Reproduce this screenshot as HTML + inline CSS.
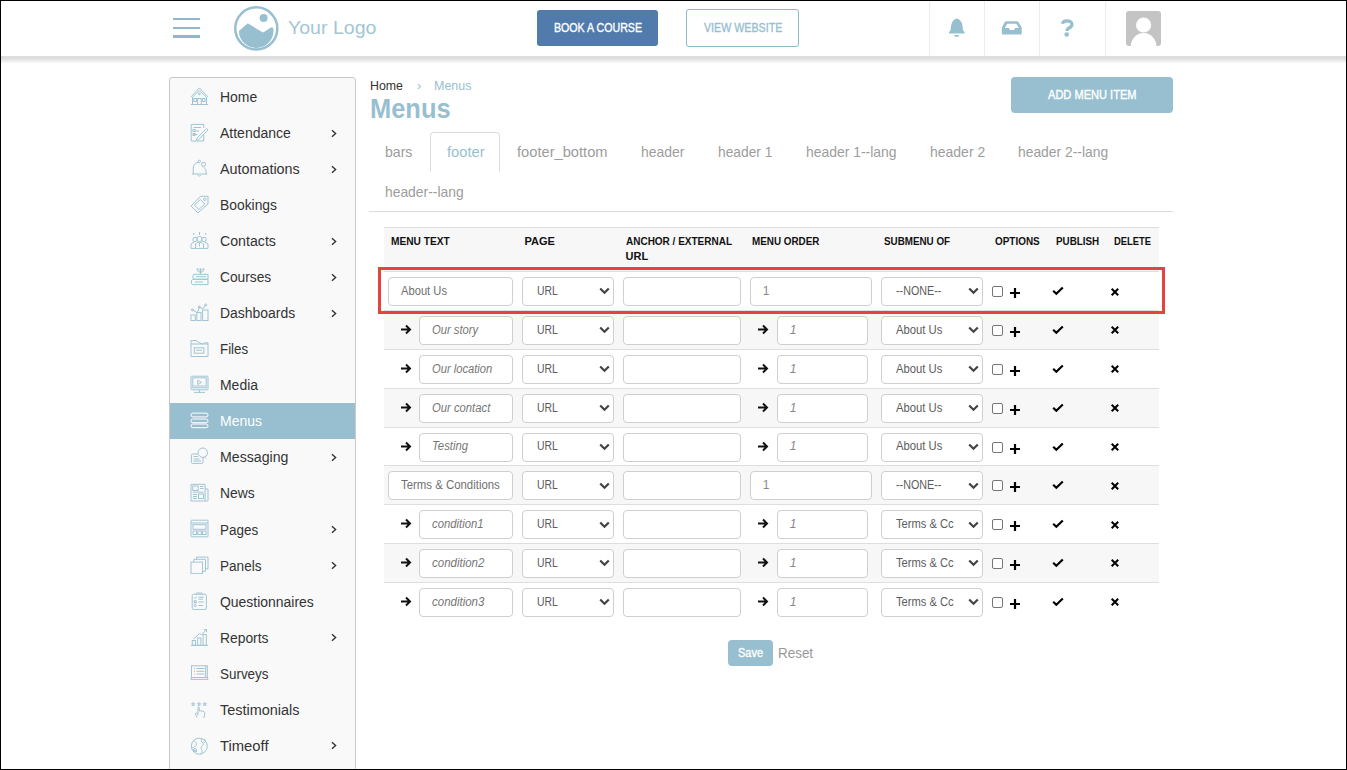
<!DOCTYPE html>
<html><head><meta charset="utf-8"><style>
html,body{margin:0;padding:0;background:#fff;}
#root{position:relative;width:1347px;height:770px;overflow:hidden;background:#fff;font-family:"Liberation Sans", sans-serif;}
.a{position:absolute;}
.t{position:absolute;white-space:pre;}
</style></head><body><div id="root">
<div class="a" style="left:0px;top:56px;width:1347px;height:1px;background:rgb(222,222,222);"></div>
<div class="a" style="left:0px;top:57px;width:1347px;height:1px;background:rgb(220,220,220);"></div>
<div class="a" style="left:0px;top:58px;width:1347px;height:1px;background:rgb(223,223,223);"></div>
<div class="a" style="left:0px;top:59px;width:1347px;height:1px;background:rgb(228,228,228);"></div>
<div class="a" style="left:0px;top:60px;width:1347px;height:1px;background:rgb(234,234,234);"></div>
<div class="a" style="left:0px;top:61px;width:1347px;height:1px;background:rgb(241,241,241);"></div>
<div class="a" style="left:0px;top:62px;width:1347px;height:1px;background:rgb(248,248,248);"></div>
<div class="a" style="left:0px;top:63px;width:1347px;height:1px;background:rgb(253,253,253);"></div>
<div class="a" style="left:172.5px;top:17.5px;width:27.5px;height:2.5px;background:#8fb9cb;"></div>
<div class="a" style="left:172.5px;top:26.5px;width:27.5px;height:2.5px;background:#8fb9cb;"></div>
<div class="a" style="left:172.5px;top:35.4px;width:27.5px;height:2.5px;background:#8fb9cb;"></div>
<svg class="a" style="left:232px;top:5px" width="48" height="48" viewBox="0 0 48 48">
<circle cx="24.3" cy="23.4" r="21.05" fill="none" stroke="#97bfcf" stroke-width="2.5"/>
<circle cx="31.6" cy="13" r="4" fill="#97bfcf"/>
<path d="M7.6 26.2 L15.7 19.2 L31 28.3 L39.4 23.2 Q40.8 22.6 40.8 25 A16.6 16.6 0 0 1 7.6 26.2 Z" fill="#97bfcf" stroke="#97bfcf" stroke-width="1.4" stroke-linejoin="round"/>
</svg>
<div id="t0" class="t" style="left:288.20px;top:17.92px;font-size:19px;line-height:19px;color:#a3c6d4;font-weight:normal;transform:scaleX(1.0287);transform-origin:0 0;">Your Logo</div>
<div class="a" style="left:537px;top:10px;width:121px;height:36px;background:#517bab;border-radius:3px;"></div>
<div id="t1" class="t" style="left:553.70px;top:21.64px;font-size:12px;line-height:12px;color:#fff;font-weight:normal;-webkit-text-stroke:0.35px #fff;transform:scaleX(0.8855);transform-origin:0 0;">BOOK A COURSE</div>
<div class="a" style="left:686px;top:9px;width:113px;height:38px;border:1px solid #8db9cb;border-radius:3px;box-sizing:border-box;"></div>
<div id="t2" class="t" style="left:703.90px;top:21.64px;font-size:12px;line-height:12px;color:#97bfcf;font-weight:normal;-webkit-text-stroke:0.35px #97bfcf;transform:scaleX(0.8896);transform-origin:0 0;">VIEW WEBSITE</div>
<div class="a" style="left:929px;top:0px;width:1px;height:56px;background:#ececec;"></div>
<div class="a" style="left:984px;top:0px;width:1px;height:56px;background:#ececec;"></div>
<div class="a" style="left:1039px;top:0px;width:1px;height:56px;background:#ececec;"></div>
<div class="a" style="left:1105px;top:0px;width:1px;height:56px;background:#ececec;"></div>
<svg class="a" style="left:940px;top:12px" width="32" height="30" viewBox="0 0 32 30">
<path d="M16.8 6.6 C18.6 6.8 20.3 8.3 21.4 10.3 C22.4 12.3 22.7 14.8 22.9 17.3 C23.1 18.7 23.9 19.4 24.6 19.9 L24.6 21.6 L9 21.6 L9 19.9 C9.7 19.4 10.5 18.7 10.7 17.3 C10.9 14.8 11.2 12.3 12.2 10.3 C13.3 8.3 15 6.8 16.8 6.6 Z" fill="#97bfcf"/>
<path d="M14.2 22.9 L19.2 22.9 C19.2 24.1 18 24.8 16.7 24.8 C15.4 24.8 14.2 24.1 14.2 22.9 Z" fill="#97bfcf"/>
</svg>
<svg class="a" style="left:996px;top:12px" width="32" height="30" viewBox="0 0 32 30">
<path d="M10.1 9.35 L21 9.35 C21.6 9.35 22 9.6 22.3 10 L25.7 15.6 L25.7 21.6 C25.7 22.2 25.3 22.6 24.7 22.6 L6.8 22.6 C6.2 22.6 5.8 22.2 5.8 21.6 L5.8 15.6 L8.8 10 C9.1 9.6 9.5 9.35 10.1 9.35 Z M11.3 11.7 L20.3 11.7 L23 16 L19.1 16 L17.9 18.1 L14 18.1 L12.9 16 L8.8 16 Z" fill="#97bfcf" fill-rule="evenodd"/>
</svg>
<svg class="a" style="left:1052px;top:12px" width="32" height="30" viewBox="0 0 32 30">
<path d="M10.4 11.8 C10.8 9.7 12.6 8.8 15.1 8.8 C17.9 8.8 19.9 10.3 19.9 12.4 C19.9 14.3 18.6 15.2 17 16 C15.6 16.8 14.9 17.4 14.9 18.9" fill="none" stroke="#97bfcf" stroke-width="3.3"/>
<circle cx="14.7" cy="22.5" r="2.3" fill="#97bfcf"/>
</svg>
<svg class="a" style="left:1126px;top:11px" width="35" height="35" viewBox="0 0 35 35">
<defs><clipPath id="av"><rect x="0" y="0" width="35" height="35" rx="3"/></clipPath></defs>
<g clip-path="url(#av)"><rect x="0" y="0" width="35" height="35" fill="#c4c4c4"/>
<circle cx="17.6" cy="14" r="7.6" fill="#fff"/>
<ellipse cx="17.6" cy="35.5" rx="12.8" ry="13.5" fill="#fff"/></g>
</svg>
<div class="a" style="left:169px;top:77px;width:187px;height:720px;background:#f9f9f9;border:1px solid #c9c9c9;border-radius:3px;box-sizing:border-box;"></div>
<div id="t3" class="t" style="left:220.00px;top:90.15px;font-size:14px;line-height:14px;color:#333;font-weight:normal;transform:scaleX(0.9957);transform-origin:0 0;">Home</div>
<svg class="a" style="left:190px;top:87.00px" width="19" height="19" viewBox="0 0 19 19" fill="none" stroke="#9fc5d4" stroke-width="1"><path d="M1 9.9 L9.3 0.9 L18 9.9 M3 9.9 L9.3 3.2 L16 9.9"/><circle cx="9.3" cy="6.8" r="1"/><path d="M2.5 10 L2.5 17.4 M16.5 10 L16.5 17.4 M0.8 17.5 L18.2 17.5"/><rect x="7.6" y="11.5" width="3.6" height="6"/><rect x="3.8" y="11.5" width="2.6" height="3"/><rect x="12.4" y="11.5" width="2.6" height="3"/></svg>
<div id="t4" class="t" style="left:220.00px;top:126.18px;font-size:14px;line-height:14px;color:#333;font-weight:normal;">Attendance</div>
<svg class="a" style="left:190px;top:123.03px" width="19" height="19" viewBox="0 0 19 19" fill="none" stroke="#9fc5d4" stroke-width="1"><path d="M13.8 5 L13.8 1.4 L1.2 1.4 L1.2 18 L13.8 18 L13.8 12"/><path d="M7 15.2 L16.5 5.5 L18 7 L8.5 16.7 L6.5 17.2 Z"/><path d="M3.5 4.5 L11 4.5 M3.5 8 L9 8 M3.5 11.5 L7 11.5"/><rect x="3" y="6.5" width="2" height="2"/><rect x="3" y="10.5" width="2" height="2"/></svg>
<svg class="a" style="left:331px;top:128.63px" width="7" height="9" viewBox="0 0 7 9"><path d="M1 1.2 L4.6 4.5 L1 7.8" fill="none" stroke="#333" stroke-width="1.4"/></svg>
<div id="t5" class="t" style="left:220.00px;top:162.21px;font-size:14px;line-height:14px;color:#333;font-weight:normal;transform:scaleX(1.0241);transform-origin:0 0;">Automations</div>
<svg class="a" style="left:190px;top:159.06px" width="19" height="19" viewBox="0 0 19 19" fill="none" stroke="#9fc5d4" stroke-width="1"><path d="M3.2 15 L3.2 9 C3.2 5.8 5.5 3.6 8.5 3.2 M13.5 8.5 C15.5 9.5 16 11 16 12.5 L16 15 M1.8 15 L17.4 15"/><circle cx="9.3" cy="2.4" r="1.2"/><circle cx="13.6" cy="5.4" r="2.1"/><path d="M7.8 16.2 C8 17.3 10.6 17.3 10.8 16.2"/></svg>
<svg class="a" style="left:331px;top:164.66px" width="7" height="9" viewBox="0 0 7 9"><path d="M1 1.2 L4.6 4.5 L1 7.8" fill="none" stroke="#333" stroke-width="1.4"/></svg>
<div id="t6" class="t" style="left:220.00px;top:198.24px;font-size:14px;line-height:14px;color:#333;font-weight:normal;transform:scaleX(0.9897);transform-origin:0 0;">Bookings</div>
<svg class="a" style="left:190px;top:195.09px" width="19" height="19" viewBox="0 0 19 19" fill="none" stroke="#9fc5d4" stroke-width="1"><path d="M10.5 1.3 L18 1.3 L18 9 L7.8 18 L1 10.9 Z"/><path d="M10.3 4.5 L14.8 9 L8.8 14.5 L4.3 10 Z"/><circle cx="14.8" cy="4.3" r="1.2"/></svg>
<div id="t7" class="t" style="left:220.00px;top:234.27px;font-size:14px;line-height:14px;color:#333;font-weight:normal;transform:scaleX(1.0118);transform-origin:0 0;">Contacts</div>
<svg class="a" style="left:190px;top:231.12px" width="19" height="19" viewBox="0 0 19 19" fill="none" stroke="#9fc5d4" stroke-width="1"><circle cx="5" cy="8.5" r="2.2"/><circle cx="14" cy="8.5" r="2.2"/><circle cx="9.5" cy="8" r="2.6"/><path d="M1 17.4 L1 14 C1 12.3 2.5 11.5 4 11.5 M18 17.4 L18 14 C18 12.3 16.5 11.5 15 11.5 M5.5 17.4 L5.5 14 C5.5 12.2 7.2 11.3 9.5 11.3 C11.8 11.3 13.5 12.2 13.5 14 L13.5 17.4 M1 17.4 L18 17.4 M9.5 12 L9.5 15.5"/><path d="M3 2.8 L4.4 2.8 M3.7 2.1 L3.7 3.5 M15 2.8 L16.4 2.8 M15.7 2.1 L15.7 3.5 M9.5 1 L9.5 4"/></svg>
<svg class="a" style="left:331px;top:236.72px" width="7" height="9" viewBox="0 0 7 9"><path d="M1 1.2 L4.6 4.5 L1 7.8" fill="none" stroke="#333" stroke-width="1.4"/></svg>
<div id="t8" class="t" style="left:220.00px;top:270.30px;font-size:14px;line-height:14px;color:#333;font-weight:normal;transform:scaleX(0.9820);transform-origin:0 0;">Courses</div>
<svg class="a" style="left:190px;top:267.15px" width="19" height="19" viewBox="0 0 19 19" fill="none" stroke="#9fc5d4" stroke-width="1"><path d="M10.5 1.3 L10.5 7 M10.5 5.2 C8 5.2 7 3.5 7 1.8 C9 1.8 10.5 3 10.5 5.2 M10.5 5.2 C13 5.2 14 3.5 14 1.8 C12 1.8 10.5 3 10.5 5.2"/><path d="M4 7.3 L18 7.3 L18 12.2 L4 12.2 C2.5 12.2 2.5 7.3 4 7.3 Z M2.5 12.4 L18 12.4 L18 17.6 L2.5 17.6 C0.9 17.6 0.9 12.4 2.5 12.4 Z M6 9.7 L16 9.7 M5 15 L13 15"/></svg>
<svg class="a" style="left:331px;top:272.75px" width="7" height="9" viewBox="0 0 7 9"><path d="M1 1.2 L4.6 4.5 L1 7.8" fill="none" stroke="#333" stroke-width="1.4"/></svg>
<div id="t9" class="t" style="left:220.00px;top:306.33px;font-size:14px;line-height:14px;color:#333;font-weight:normal;transform:scaleX(0.9947);transform-origin:0 0;">Dashboards</div>
<svg class="a" style="left:190px;top:303.18px" width="19" height="19" viewBox="0 0 19 19" fill="none" stroke="#9fc5d4" stroke-width="1"><rect x="1" y="12" width="4.2" height="5.5"/><rect x="6.8" y="9.5" width="4.2" height="8"/><rect x="12.6" y="7" width="5.4" height="10.5"/><path d="M2.7 7 L7.5 9.8 L9.3 4.2 L13 5.8 L15.5 2.2"/><circle cx="2.4" cy="6.8" r="1"/><circle cx="9.3" cy="4" r="1"/><circle cx="15.8" cy="1.9" r="1"/></svg>
<svg class="a" style="left:331px;top:308.78px" width="7" height="9" viewBox="0 0 7 9"><path d="M1 1.2 L4.6 4.5 L1 7.8" fill="none" stroke="#333" stroke-width="1.4"/></svg>
<div id="t10" class="t" style="left:220.00px;top:342.36px;font-size:14px;line-height:14px;color:#333;font-weight:normal;transform:scaleX(0.9505);transform-origin:0 0;">Files</div>
<svg class="a" style="left:190px;top:339.21px" width="19" height="19" viewBox="0 0 19 19" fill="none" stroke="#9fc5d4" stroke-width="1"><path d="M1 3.3 L1 17.5 L18 17.5 L18 3.8 L15.2 3.8 L12.5 5 L9.3 3.6 L6 1.5 L1 1.5 Z M1 5 L18 5"/><rect x="4.3" y="8.8" width="9.6" height="5.4"/><path d="M6 11.2 L12 11.2"/></svg>
<div id="t11" class="t" style="left:220.00px;top:378.39px;font-size:14px;line-height:14px;color:#333;font-weight:normal;transform:scaleX(0.9963);transform-origin:0 0;">Media</div>
<svg class="a" style="left:190px;top:375.24px" width="19" height="19" viewBox="0 0 19 19" fill="none" stroke="#9fc5d4" stroke-width="1"><rect x="1" y="1.2" width="17" height="13.6" rx="0.8"/><rect x="2.8" y="2.8" width="13.4" height="10"/><path d="M7.8 5.2 L11.6 7.4 L7.8 9.6 Z M9.3 14.8 L9.3 17.4 M4 17.4 L15 17.4 M3.5 11 L15.5 11"/></svg>
<div class="a" style="left:170px;top:403.27px;width:185px;height:36px;background:#97bfcf;"></div>
<div id="t12" class="t" style="left:220.00px;top:414.42px;font-size:14px;line-height:14px;color:#fff;font-weight:normal;transform:scaleX(0.9969);transform-origin:0 0;">Menus</div>
<svg class="a" style="left:190px;top:411.27px" width="19" height="19" viewBox="0 0 19 19" fill="none" stroke="#ffffff" stroke-width="1"><rect x="1" y="2.1" width="17" height="3.8" rx="1.9"/><rect x="1" y="8" width="17" height="3.7" rx="1.85"/><rect x="1" y="13" width="17" height="3.7" rx="1.85"/></svg>
<div id="t13" class="t" style="left:220.00px;top:450.45px;font-size:14px;line-height:14px;color:#333;font-weight:normal;transform:scaleX(1.0103);transform-origin:0 0;">Messaging</div>
<svg class="a" style="left:190px;top:447.30px" width="19" height="19" viewBox="0 0 19 19" fill="none" stroke="#9fc5d4" stroke-width="1"><circle cx="12.8" cy="5.7" r="4.7"/><path d="M8 7 L2.6 7 C1.8 7 1.4 7.5 1.4 8.2 L1.4 15.4 C1.4 16 1.8 16.4 2.6 16.4 L11.8 16.4 C12.5 16.4 13 16 13 15.4 L13 10.5 M3.5 9.5 L8 9.5 M3.5 12 L9.5 12 M3.5 14 L11 14 M14.5 10 L16.3 11.6"/></svg>
<svg class="a" style="left:331px;top:452.90px" width="7" height="9" viewBox="0 0 7 9"><path d="M1 1.2 L4.6 4.5 L1 7.8" fill="none" stroke="#333" stroke-width="1.4"/></svg>
<div id="t14" class="t" style="left:220.00px;top:486.48px;font-size:14px;line-height:14px;color:#333;font-weight:normal;transform:scaleX(0.9881);transform-origin:0 0;">News</div>
<svg class="a" style="left:190px;top:483.33px" width="19" height="19" viewBox="0 0 19 19" fill="none" stroke="#9fc5d4" stroke-width="1"><path d="M15.1 1.3 L1 1.3 L1 18 L17.5 18 C18 18 18 17.5 18 17 L18 6 L15.1 6 Z M15.1 6 L15.1 18"/><rect x="2.8" y="3" width="5.4" height="4.5"/><rect x="8.5" y="11" width="5" height="4.5"/><path d="M10 3.5 L13.5 3.5 M10 5.5 L13.5 5.5 M2.8 9.2 L13.5 9.2 M2.8 11.5 L7 11.5 M2.8 13.5 L7 13.5 M2.8 15.5 L7 15.5"/></svg>
<div id="t15" class="t" style="left:220.00px;top:522.51px;font-size:14px;line-height:14px;color:#333;font-weight:normal;transform:scaleX(0.9621);transform-origin:0 0;">Pages</div>
<svg class="a" style="left:190px;top:519.36px" width="19" height="19" viewBox="0 0 19 19" fill="none" stroke="#9fc5d4" stroke-width="1"><rect x="1" y="1.2" width="17" height="16.6" rx="0.5"/><path d="M1 4 L18 4"/><rect x="3" y="5.7" width="13" height="4.6"/><rect x="3" y="12" width="3.5" height="3.5"/><rect x="7.8" y="12" width="3.5" height="3.5"/><rect x="12.5" y="12" width="3.5" height="3.5"/></svg>
<svg class="a" style="left:331px;top:524.96px" width="7" height="9" viewBox="0 0 7 9"><path d="M1 1.2 L4.6 4.5 L1 7.8" fill="none" stroke="#333" stroke-width="1.4"/></svg>
<div id="t16" class="t" style="left:220.00px;top:558.54px;font-size:14px;line-height:14px;color:#333;font-weight:normal;transform:scaleX(0.9693);transform-origin:0 0;">Panels</div>
<svg class="a" style="left:190px;top:555.39px" width="19" height="19" viewBox="0 0 19 19" fill="none" stroke="#9fc5d4" stroke-width="1"><path d="M6.4 4.3 L6.4 2.1 L18 2.1 L18 13.8 L15.5 13.8 M3.8 7 L3.8 4.3 L15.5 4.3 L15.5 16.3 L12.6 16.3"/><rect x="1" y="7.1" width="11.6" height="11.6"/></svg>
<svg class="a" style="left:331px;top:560.99px" width="7" height="9" viewBox="0 0 7 9"><path d="M1 1.2 L4.6 4.5 L1 7.8" fill="none" stroke="#333" stroke-width="1.4"/></svg>
<div id="t17" class="t" style="left:220.00px;top:594.57px;font-size:14px;line-height:14px;color:#333;font-weight:normal;transform:scaleX(0.9961);transform-origin:0 0;">Questionnaires</div>
<svg class="a" style="left:190px;top:591.42px" width="19" height="19" viewBox="0 0 19 19" fill="none" stroke="#9fc5d4" stroke-width="1"><rect x="2.2" y="3.2" width="14.2" height="15.4" rx="1.5"/><path d="M6.5 3.2 L6.5 2 L12 2 L12 3.2 M4.2 6.5 L5 7.5 L6.5 5.5 M8.5 6.2 L14 6.2 M8.5 8.2 L13 8.2 M8.5 11 L14 11 M8.5 14.5 L13 14.5"/><rect x="4.2" y="9.8" width="2" height="2"/><circle cx="5.2" cy="14.5" r="1"/></svg>
<div id="t18" class="t" style="left:220.00px;top:630.60px;font-size:14px;line-height:14px;color:#333;font-weight:normal;transform:scaleX(0.9892);transform-origin:0 0;">Reports</div>
<svg class="a" style="left:190px;top:627.45px" width="19" height="19" viewBox="0 0 19 19" fill="none" stroke="#9fc5d4" stroke-width="1"><rect x="2.3" y="13.5" width="3.2" height="4.8"/><rect x="7.7" y="11" width="3.2" height="7.3"/><rect x="13.1" y="7.5" width="3.2" height="10.8"/><path d="M0.8 18.4 L18.2 18.4 M3.5 12 L9.5 6.5 L11.5 7.8 L16.3 2.8 M13.8 2.6 L16.5 2.6 L16.5 5.3"/></svg>
<svg class="a" style="left:331px;top:633.05px" width="7" height="9" viewBox="0 0 7 9"><path d="M1 1.2 L4.6 4.5 L1 7.8" fill="none" stroke="#333" stroke-width="1.4"/></svg>
<div id="t19" class="t" style="left:220.00px;top:666.63px;font-size:14px;line-height:14px;color:#333;font-weight:normal;transform:scaleX(0.9589);transform-origin:0 0;">Surveys</div>
<svg class="a" style="left:190px;top:663.48px" width="19" height="19" viewBox="0 0 19 19" fill="none" stroke="#9fc5d4" stroke-width="1"><rect x="1.5" y="2.8" width="15.8" height="11.7"/><path d="M0.8 16.4 L18 16.4 M1.5 14.5 L0.8 16.4 M17.3 14.5 L18 16.4 M4 5.5 L5 5.5 M6.5 5.5 L14.5 5.5 M4 8.3 L5 8.3 M6.5 8.3 L14.5 8.3 M4 11 L5 11 M6.5 11 L14.5 11 M15.7 3 L15.7 14"/></svg>
<div id="t20" class="t" style="left:220.00px;top:702.66px;font-size:14px;line-height:14px;color:#333;font-weight:normal;transform:scaleX(1.0308);transform-origin:0 0;">Testimonials</div>
<svg class="a" style="left:190px;top:699.51px" width="19" height="19" viewBox="0 0 19 19" fill="none" stroke="#9fc5d4" stroke-width="1"><path d="M3.1 2.5 L3.6 3.6 L4.7 3.7 L3.9 4.5 L4.1 5.6 L3.1 5 L2.1 5.6 L2.3 4.5 L1.5 3.7 L2.6 3.6 Z M9 2.5 L9.5 3.6 L10.6 3.7 L9.8 4.5 L10 5.6 L9 5 L8 5.6 L8.2 4.5 L7.4 3.7 L8.5 3.6 Z M14.8 2.5 L15.3 3.6 L16.4 3.7 L15.6 4.5 L15.8 5.6 L14.8 5 L13.8 5.6 L14 4.5 L13.2 3.7 L14.3 3.6 Z"/><path d="M8 15.2 L8 7.5 C8 6.8 9.3 6.8 9.3 7.5 L9.3 11 C10.5 10.5 14.5 11 14.8 12.5 L14.5 16 L13.5 18 M8 14 C6.5 12.5 5.2 13 5.5 14 L7.2 17.5"/></svg>
<div id="t21" class="t" style="left:220.00px;top:738.69px;font-size:14px;line-height:14px;color:#333;font-weight:normal;transform:scaleX(1.0565);transform-origin:0 0;">Timeoff</div>
<svg class="a" style="left:190px;top:735.54px" width="19" height="19" viewBox="0 0 19 19" fill="none" stroke="#9fc5d4" stroke-width="1"><circle cx="9.3" cy="10.2" r="8"/><path d="M4 4.5 C5.5 6 6.5 7 6.5 8.5 C6.5 10 5 10 4 11 C3 12 2 12 1.5 11.5 M12 2.6 C11 4 11 5.5 12.5 6.5 C14 7.5 13 9.5 11.5 10.5 C10.5 11.2 11.5 13 12 14.5 C12.5 16 11.5 17.5 10.5 18.2 M3 14.5 C4.5 14 6 14.5 6.5 16 M13.5 4 C14.5 3.5 15.5 4 15.5 5 C15.5 6 14.5 6.5 13.5 6.2"/><circle cx="5" cy="14" r="1.5"/></svg>
<svg class="a" style="left:331px;top:741.14px" width="7" height="9" viewBox="0 0 7 9"><path d="M1 1.2 L4.6 4.5 L1 7.8" fill="none" stroke="#333" stroke-width="1.4"/></svg>
<div id="t22" class="t" style="left:370.00px;top:78.80px;font-size:13px;line-height:13px;color:#333;font-weight:normal;transform:scaleX(0.9514);transform-origin:0 0;">Home</div>
<div id="t23" class="t" style="left:417.00px;top:78.80px;font-size:13px;line-height:13px;color:#97bfcf;font-weight:normal;">›</div>
<div id="t24" class="t" style="left:433.50px;top:78.80px;font-size:13px;line-height:13px;color:#97bfcf;font-weight:normal;transform:scaleX(0.9582);transform-origin:0 0;">Menus</div>
<div id="t25" class="t" style="left:369.60px;top:96.24px;font-size:27px;line-height:27px;color:#97bfcf;font-weight:bold;transform:scaleX(0.9425);transform-origin:0 0;">Menus</div>
<div class="a" style="left:1011px;top:77px;width:162px;height:36px;background:#97bfcf;border-radius:4px;"></div>
<div id="t26" class="t" style="left:1048.10px;top:88.54px;font-size:12px;line-height:12px;color:#fff;font-weight:normal;-webkit-text-stroke:0.35px #fff;transform:scaleX(0.9219);transform-origin:0 0;">ADD MENU ITEM</div>
<div class="a" style="left:430px;top:132px;width:70px;height:40px;border:1px solid #dcdcdc;border-bottom:none;border-radius:4px 4px 0 0;box-sizing:border-box;background:#fff;"></div>
<div class="a" style="left:369px;top:211px;width:804px;height:1px;background:#dcdcdc;"></div>
<div id="t27" class="t" style="left:385.20px;top:144.10px;font-size:15px;line-height:15px;color:#9d9d9d;font-weight:normal;transform:scaleX(0.9388);transform-origin:0 0;">bars</div>
<div id="t28" class="t" style="left:446.50px;top:144.10px;font-size:15px;line-height:15px;color:#97bfcf;font-weight:normal;transform:scaleX(0.9802);transform-origin:0 0;">footer</div>
<div id="t29" class="t" style="left:517.40px;top:144.10px;font-size:15px;line-height:15px;color:#9d9d9d;font-weight:normal;transform:scaleX(0.9788);transform-origin:0 0;">footer_bottom</div>
<div id="t30" class="t" style="left:641.40px;top:144.10px;font-size:15px;line-height:15px;color:#9d9d9d;font-weight:normal;transform:scaleX(0.9311);transform-origin:0 0;">header</div>
<div id="t31" class="t" style="left:717.80px;top:144.10px;font-size:15px;line-height:15px;color:#9d9d9d;font-weight:normal;transform:scaleX(0.9186);transform-origin:0 0;">header 1</div>
<div id="t32" class="t" style="left:805.90px;top:144.10px;font-size:15px;line-height:15px;color:#9d9d9d;font-weight:normal;transform:scaleX(0.9285);transform-origin:0 0;">header 1--lang</div>
<div id="t33" class="t" style="left:929.60px;top:144.10px;font-size:15px;line-height:15px;color:#9d9d9d;font-weight:normal;transform:scaleX(0.9321);transform-origin:0 0;">header 2</div>
<div id="t34" class="t" style="left:1017.90px;top:144.10px;font-size:15px;line-height:15px;color:#9d9d9d;font-weight:normal;transform:scaleX(0.9234);transform-origin:0 0;">header 2--lang</div>
<div id="t35" class="t" style="left:385.20px;top:183.90px;font-size:15px;line-height:15px;color:#9d9d9d;font-weight:normal;transform:scaleX(0.9240);transform-origin:0 0;">header--lang</div>
<div class="a" style="left:384px;top:226.6px;width:775px;height:44.6px;background:#f7f7f7;border-top:1px solid #dedede;box-sizing:border-box;"></div>
<div id="t36" class="t" style="left:391.10px;top:235.89px;font-size:11px;line-height:11px;color:#111;font-weight:bold;transform:scaleX(0.9235);transform-origin:0 0;">MENU TEXT</div>
<div id="t37" class="t" style="left:524.60px;top:235.89px;font-size:11px;line-height:11px;color:#111;font-weight:bold;">PAGE</div>
<div id="t38" class="t" style="left:625.60px;top:235.89px;font-size:11px;line-height:11px;color:#111;font-weight:bold;transform:scaleX(0.9080);transform-origin:0 0;">ANCHOR / EXTERNAL</div>
<div id="t39" class="t" style="left:752.40px;top:235.89px;font-size:11px;line-height:11px;color:#111;font-weight:bold;transform:scaleX(0.8966);transform-origin:0 0;">MENU ORDER</div>
<div id="t40" class="t" style="left:884.00px;top:235.89px;font-size:11px;line-height:11px;color:#111;font-weight:bold;transform:scaleX(0.8938);transform-origin:0 0;">SUBMENU OF</div>
<div id="t41" class="t" style="left:995.30px;top:235.89px;font-size:11px;line-height:11px;color:#111;font-weight:bold;transform:scaleX(0.9027);transform-origin:0 0;">OPTIONS</div>
<div id="t42" class="t" style="left:1055.60px;top:235.89px;font-size:11px;line-height:11px;color:#111;font-weight:bold;transform:scaleX(0.8948);transform-origin:0 0;">PUBLISH</div>
<div id="t43" class="t" style="left:1114.30px;top:235.89px;font-size:11px;line-height:11px;color:#111;font-weight:bold;transform:scaleX(0.8547);transform-origin:0 0;">DELETE</div>
<div id="t44" class="t" style="left:625.60px;top:250.69px;font-size:11px;line-height:11px;color:#111;font-weight:bold;">URL</div>
<div class="a" style="left:384px;top:271.2px;width:775px;height:39px;background:#fff;border-top:1px solid #dedede;box-sizing:border-box;"></div>
<div class="a" style="left:388px;top:277.2px;width:125px;height:29px;background:#fff;border:1px solid #cfcfcf;border-radius:4px;box-sizing:border-box;"></div>
<div id="t45" class="t" style="left:401.00px;top:285.04px;font-size:12px;line-height:12px;color:#707070;font-weight:normal;transform:scaleX(0.9319);transform-origin:0 0;">About Us</div>
<div class="a" style="left:522px;top:277.2px;width:92px;height:29px;background:#fff;border:1px solid #cfcfcf;border-radius:4px;box-sizing:border-box;"></div>
<div id="t46" class="t" style="left:536.60px;top:285.04px;font-size:12px;line-height:12px;color:#5c5c5c;font-weight:normal;transform:scaleX(0.8661);transform-origin:0 0;">URL</div>
<svg class="a" style="left:598.5px;top:287.4px" width="11" height="8" viewBox="0 0 11 8"><path d="M1.2 1.5 L5.5 5.8 L9.8 1.5" fill="none" stroke="#444" stroke-width="2.2"/></svg>
<div class="a" style="left:623px;top:277.2px;width:118px;height:29px;background:#fff;border:1px solid #cfcfcf;border-radius:4px;box-sizing:border-box;"></div>
<div class="a" style="left:750px;top:277.2px;width:122px;height:29px;background:#fff;border:1px solid #cfcfcf;border-radius:4px;box-sizing:border-box;"></div>
<div id="t47" class="t" style="left:762.80px;top:285.04px;font-size:12px;line-height:12px;color:#888;font-weight:normal;">1</div>
<div class="a" style="left:881px;top:277.2px;width:102px;height:29px;background:#fff;border:1px solid #cfcfcf;border-radius:4px;box-sizing:border-box;"></div>
<div id="t48" class="t" style="left:895.60px;top:285.04px;font-size:12px;line-height:12px;color:#5c5c5c;font-weight:normal;transform:scaleX(0.8943);transform-origin:0 0;">--NONE--</div>
<svg class="a" style="left:967.8px;top:287.4px" width="11" height="8" viewBox="0 0 11 8"><path d="M1.2 1.5 L5.5 5.8 L9.8 1.5" fill="none" stroke="#444" stroke-width="2.2"/></svg>
<div class="a" style="left:992px;top:286.2px;width:11px;height:11px;border:1px solid #767676;border-radius:2px;box-sizing:border-box;background:#fff;"></div>
<svg class="a" style="left:1009px;top:287.20px" width="12" height="12" viewBox="0 0 12 12"><path d="M6 1 L6 11 M1 6 L11 6" stroke="#000" stroke-width="2.2"/></svg>
<svg class="a" style="left:1052px;top:286.20px" width="12" height="10" viewBox="0 0 12 10"><path d="M1.2 4.8 L4.3 7.8 L10.8 1.5" fill="none" stroke="#000" stroke-width="2.2"/></svg>
<svg class="a" style="left:1110px;top:286.50px" width="10" height="10" viewBox="0 0 10 10"><path d="M1.7 1.7 L8.2 8.2 M8.2 1.7 L1.7 8.2" stroke="#000" stroke-width="2"/></svg>
<div class="a" style="left:384px;top:310.05px;width:775px;height:39px;background:#f7f7f7;border-top:1px solid #dedede;box-sizing:border-box;"></div>
<svg class="a" style="left:400px;top:324.05px" width="12" height="11" viewBox="0 0 12 11"><path d="M1 5.5 L10 5.5 M6 1.5 L10 5.5 L6 9.5" fill="none" stroke="#111" stroke-width="2"/></svg>
<div class="a" style="left:419px;top:316.05px;width:94px;height:29px;background:#fff;border:1px solid #cfcfcf;border-radius:4px;box-sizing:border-box;"></div>
<div id="t49" class="t" style="left:431.60px;top:323.89px;font-size:12px;line-height:12px;color:#767676;font-weight:normal;font-style:italic;transform:scaleX(0.9363);transform-origin:0 0;">Our story</div>
<div class="a" style="left:522px;top:316.05px;width:92px;height:29px;background:#fff;border:1px solid #cfcfcf;border-radius:4px;box-sizing:border-box;"></div>
<div id="t50" class="t" style="left:536.60px;top:323.89px;font-size:12px;line-height:12px;color:#5c5c5c;font-weight:normal;transform:scaleX(0.8661);transform-origin:0 0;">URL</div>
<svg class="a" style="left:598.5px;top:326.25px" width="11" height="8" viewBox="0 0 11 8"><path d="M1.2 1.5 L5.5 5.8 L9.8 1.5" fill="none" stroke="#444" stroke-width="2.2"/></svg>
<div class="a" style="left:623px;top:316.05px;width:118px;height:29px;background:#fff;border:1px solid #cfcfcf;border-radius:4px;box-sizing:border-box;"></div>
<svg class="a" style="left:757px;top:324.05px" width="12" height="11" viewBox="0 0 12 11"><path d="M1 5.5 L10 5.5 M6 1.5 L10 5.5 L6 9.5" fill="none" stroke="#111" stroke-width="2"/></svg>
<div class="a" style="left:777px;top:316.05px;width:91px;height:29px;background:#fff;border:1px solid #cfcfcf;border-radius:4px;box-sizing:border-box;"></div>
<div id="t51" class="t" style="left:789.80px;top:323.89px;font-size:12px;line-height:12px;color:#888;font-weight:normal;font-style:italic;">1</div>
<div class="a" style="left:881px;top:316.05px;width:102px;height:29px;background:#fff;border:1px solid #cfcfcf;border-radius:4px;box-sizing:border-box;"></div>
<div id="t52" class="t" style="left:895.60px;top:323.89px;font-size:12px;line-height:12px;color:#5c5c5c;font-weight:normal;transform:scaleX(0.9380);transform-origin:0 0;">About Us</div>
<svg class="a" style="left:967.8px;top:326.25px" width="11" height="8" viewBox="0 0 11 8"><path d="M1.2 1.5 L5.5 5.8 L9.8 1.5" fill="none" stroke="#444" stroke-width="2.2"/></svg>
<div class="a" style="left:992px;top:325.05px;width:11px;height:11px;border:1px solid #767676;border-radius:2px;box-sizing:border-box;background:#fff;"></div>
<svg class="a" style="left:1009px;top:326.05px" width="12" height="12" viewBox="0 0 12 12"><path d="M6 1 L6 11 M1 6 L11 6" stroke="#000" stroke-width="2.2"/></svg>
<svg class="a" style="left:1052px;top:325.05px" width="12" height="10" viewBox="0 0 12 10"><path d="M1.2 4.8 L4.3 7.8 L10.8 1.5" fill="none" stroke="#000" stroke-width="2.2"/></svg>
<svg class="a" style="left:1110px;top:325.35px" width="10" height="10" viewBox="0 0 10 10"><path d="M1.7 1.7 L8.2 8.2 M8.2 1.7 L1.7 8.2" stroke="#000" stroke-width="2"/></svg>
<div class="a" style="left:384px;top:348.9px;width:775px;height:39px;background:#fff;border-top:1px solid #dedede;box-sizing:border-box;"></div>
<svg class="a" style="left:400px;top:362.9px" width="12" height="11" viewBox="0 0 12 11"><path d="M1 5.5 L10 5.5 M6 1.5 L10 5.5 L6 9.5" fill="none" stroke="#111" stroke-width="2"/></svg>
<div class="a" style="left:419px;top:354.9px;width:94px;height:29px;background:#fff;border:1px solid #cfcfcf;border-radius:4px;box-sizing:border-box;"></div>
<div id="t53" class="t" style="left:431.60px;top:362.74px;font-size:12px;line-height:12px;color:#767676;font-weight:normal;font-style:italic;transform:scaleX(0.9304);transform-origin:0 0;">Our location</div>
<div class="a" style="left:522px;top:354.9px;width:92px;height:29px;background:#fff;border:1px solid #cfcfcf;border-radius:4px;box-sizing:border-box;"></div>
<div id="t54" class="t" style="left:536.60px;top:362.74px;font-size:12px;line-height:12px;color:#5c5c5c;font-weight:normal;transform:scaleX(0.8661);transform-origin:0 0;">URL</div>
<svg class="a" style="left:598.5px;top:365.09999999999997px" width="11" height="8" viewBox="0 0 11 8"><path d="M1.2 1.5 L5.5 5.8 L9.8 1.5" fill="none" stroke="#444" stroke-width="2.2"/></svg>
<div class="a" style="left:623px;top:354.9px;width:118px;height:29px;background:#fff;border:1px solid #cfcfcf;border-radius:4px;box-sizing:border-box;"></div>
<svg class="a" style="left:757px;top:362.9px" width="12" height="11" viewBox="0 0 12 11"><path d="M1 5.5 L10 5.5 M6 1.5 L10 5.5 L6 9.5" fill="none" stroke="#111" stroke-width="2"/></svg>
<div class="a" style="left:777px;top:354.9px;width:91px;height:29px;background:#fff;border:1px solid #cfcfcf;border-radius:4px;box-sizing:border-box;"></div>
<div id="t55" class="t" style="left:789.80px;top:362.74px;font-size:12px;line-height:12px;color:#888;font-weight:normal;font-style:italic;">1</div>
<div class="a" style="left:881px;top:354.9px;width:102px;height:29px;background:#fff;border:1px solid #cfcfcf;border-radius:4px;box-sizing:border-box;"></div>
<div id="t56" class="t" style="left:895.60px;top:362.74px;font-size:12px;line-height:12px;color:#5c5c5c;font-weight:normal;transform:scaleX(0.9380);transform-origin:0 0;">About Us</div>
<svg class="a" style="left:967.8px;top:365.09999999999997px" width="11" height="8" viewBox="0 0 11 8"><path d="M1.2 1.5 L5.5 5.8 L9.8 1.5" fill="none" stroke="#444" stroke-width="2.2"/></svg>
<div class="a" style="left:992px;top:363.9px;width:11px;height:11px;border:1px solid #767676;border-radius:2px;box-sizing:border-box;background:#fff;"></div>
<svg class="a" style="left:1009px;top:364.90px" width="12" height="12" viewBox="0 0 12 12"><path d="M6 1 L6 11 M1 6 L11 6" stroke="#000" stroke-width="2.2"/></svg>
<svg class="a" style="left:1052px;top:363.90px" width="12" height="10" viewBox="0 0 12 10"><path d="M1.2 4.8 L4.3 7.8 L10.8 1.5" fill="none" stroke="#000" stroke-width="2.2"/></svg>
<svg class="a" style="left:1110px;top:364.20px" width="10" height="10" viewBox="0 0 10 10"><path d="M1.7 1.7 L8.2 8.2 M8.2 1.7 L1.7 8.2" stroke="#000" stroke-width="2"/></svg>
<div class="a" style="left:384px;top:387.75px;width:775px;height:39px;background:#f7f7f7;border-top:1px solid #dedede;box-sizing:border-box;"></div>
<svg class="a" style="left:400px;top:401.75px" width="12" height="11" viewBox="0 0 12 11"><path d="M1 5.5 L10 5.5 M6 1.5 L10 5.5 L6 9.5" fill="none" stroke="#111" stroke-width="2"/></svg>
<div class="a" style="left:419px;top:393.75px;width:94px;height:29px;background:#fff;border:1px solid #cfcfcf;border-radius:4px;box-sizing:border-box;"></div>
<div id="t57" class="t" style="left:431.60px;top:401.59px;font-size:12px;line-height:12px;color:#767676;font-weight:normal;font-style:italic;transform:scaleX(0.9398);transform-origin:0 0;">Our contact</div>
<div class="a" style="left:522px;top:393.75px;width:92px;height:29px;background:#fff;border:1px solid #cfcfcf;border-radius:4px;box-sizing:border-box;"></div>
<div id="t58" class="t" style="left:536.60px;top:401.59px;font-size:12px;line-height:12px;color:#5c5c5c;font-weight:normal;transform:scaleX(0.8661);transform-origin:0 0;">URL</div>
<svg class="a" style="left:598.5px;top:403.95px" width="11" height="8" viewBox="0 0 11 8"><path d="M1.2 1.5 L5.5 5.8 L9.8 1.5" fill="none" stroke="#444" stroke-width="2.2"/></svg>
<div class="a" style="left:623px;top:393.75px;width:118px;height:29px;background:#fff;border:1px solid #cfcfcf;border-radius:4px;box-sizing:border-box;"></div>
<svg class="a" style="left:757px;top:401.75px" width="12" height="11" viewBox="0 0 12 11"><path d="M1 5.5 L10 5.5 M6 1.5 L10 5.5 L6 9.5" fill="none" stroke="#111" stroke-width="2"/></svg>
<div class="a" style="left:777px;top:393.75px;width:91px;height:29px;background:#fff;border:1px solid #cfcfcf;border-radius:4px;box-sizing:border-box;"></div>
<div id="t59" class="t" style="left:789.80px;top:401.59px;font-size:12px;line-height:12px;color:#888;font-weight:normal;font-style:italic;">1</div>
<div class="a" style="left:881px;top:393.75px;width:102px;height:29px;background:#fff;border:1px solid #cfcfcf;border-radius:4px;box-sizing:border-box;"></div>
<div id="t60" class="t" style="left:895.60px;top:401.59px;font-size:12px;line-height:12px;color:#5c5c5c;font-weight:normal;transform:scaleX(0.9380);transform-origin:0 0;">About Us</div>
<svg class="a" style="left:967.8px;top:403.95px" width="11" height="8" viewBox="0 0 11 8"><path d="M1.2 1.5 L5.5 5.8 L9.8 1.5" fill="none" stroke="#444" stroke-width="2.2"/></svg>
<div class="a" style="left:992px;top:402.75px;width:11px;height:11px;border:1px solid #767676;border-radius:2px;box-sizing:border-box;background:#fff;"></div>
<svg class="a" style="left:1009px;top:403.75px" width="12" height="12" viewBox="0 0 12 12"><path d="M6 1 L6 11 M1 6 L11 6" stroke="#000" stroke-width="2.2"/></svg>
<svg class="a" style="left:1052px;top:402.75px" width="12" height="10" viewBox="0 0 12 10"><path d="M1.2 4.8 L4.3 7.8 L10.8 1.5" fill="none" stroke="#000" stroke-width="2.2"/></svg>
<svg class="a" style="left:1110px;top:403.05px" width="10" height="10" viewBox="0 0 10 10"><path d="M1.7 1.7 L8.2 8.2 M8.2 1.7 L1.7 8.2" stroke="#000" stroke-width="2"/></svg>
<div class="a" style="left:384px;top:426.6px;width:775px;height:39px;background:#fff;border-top:1px solid #dedede;box-sizing:border-box;"></div>
<svg class="a" style="left:400px;top:440.6px" width="12" height="11" viewBox="0 0 12 11"><path d="M1 5.5 L10 5.5 M6 1.5 L10 5.5 L6 9.5" fill="none" stroke="#111" stroke-width="2"/></svg>
<div class="a" style="left:419px;top:432.6px;width:94px;height:29px;background:#fff;border:1px solid #cfcfcf;border-radius:4px;box-sizing:border-box;"></div>
<div id="t61" class="t" style="left:431.60px;top:440.44px;font-size:12px;line-height:12px;color:#767676;font-weight:normal;font-style:italic;transform:scaleX(0.9412);transform-origin:0 0;">Testing</div>
<div class="a" style="left:522px;top:432.6px;width:92px;height:29px;background:#fff;border:1px solid #cfcfcf;border-radius:4px;box-sizing:border-box;"></div>
<div id="t62" class="t" style="left:536.60px;top:440.44px;font-size:12px;line-height:12px;color:#5c5c5c;font-weight:normal;transform:scaleX(0.8661);transform-origin:0 0;">URL</div>
<svg class="a" style="left:598.5px;top:442.8px" width="11" height="8" viewBox="0 0 11 8"><path d="M1.2 1.5 L5.5 5.8 L9.8 1.5" fill="none" stroke="#444" stroke-width="2.2"/></svg>
<div class="a" style="left:623px;top:432.6px;width:118px;height:29px;background:#fff;border:1px solid #cfcfcf;border-radius:4px;box-sizing:border-box;"></div>
<svg class="a" style="left:757px;top:440.6px" width="12" height="11" viewBox="0 0 12 11"><path d="M1 5.5 L10 5.5 M6 1.5 L10 5.5 L6 9.5" fill="none" stroke="#111" stroke-width="2"/></svg>
<div class="a" style="left:777px;top:432.6px;width:91px;height:29px;background:#fff;border:1px solid #cfcfcf;border-radius:4px;box-sizing:border-box;"></div>
<div id="t63" class="t" style="left:789.80px;top:440.44px;font-size:12px;line-height:12px;color:#888;font-weight:normal;font-style:italic;">1</div>
<div class="a" style="left:881px;top:432.6px;width:102px;height:29px;background:#fff;border:1px solid #cfcfcf;border-radius:4px;box-sizing:border-box;"></div>
<div id="t64" class="t" style="left:895.60px;top:440.44px;font-size:12px;line-height:12px;color:#5c5c5c;font-weight:normal;transform:scaleX(0.9380);transform-origin:0 0;">About Us</div>
<svg class="a" style="left:967.8px;top:442.8px" width="11" height="8" viewBox="0 0 11 8"><path d="M1.2 1.5 L5.5 5.8 L9.8 1.5" fill="none" stroke="#444" stroke-width="2.2"/></svg>
<div class="a" style="left:992px;top:441.6px;width:11px;height:11px;border:1px solid #767676;border-radius:2px;box-sizing:border-box;background:#fff;"></div>
<svg class="a" style="left:1009px;top:442.60px" width="12" height="12" viewBox="0 0 12 12"><path d="M6 1 L6 11 M1 6 L11 6" stroke="#000" stroke-width="2.2"/></svg>
<svg class="a" style="left:1052px;top:441.60px" width="12" height="10" viewBox="0 0 12 10"><path d="M1.2 4.8 L4.3 7.8 L10.8 1.5" fill="none" stroke="#000" stroke-width="2.2"/></svg>
<svg class="a" style="left:1110px;top:441.90px" width="10" height="10" viewBox="0 0 10 10"><path d="M1.7 1.7 L8.2 8.2 M8.2 1.7 L1.7 8.2" stroke="#000" stroke-width="2"/></svg>
<div class="a" style="left:384px;top:465.45px;width:775px;height:39px;background:#f7f7f7;border-top:1px solid #dedede;box-sizing:border-box;"></div>
<div class="a" style="left:388px;top:471.45px;width:125px;height:29px;background:#fff;border:1px solid #cfcfcf;border-radius:4px;box-sizing:border-box;"></div>
<div id="t65" class="t" style="left:401.00px;top:479.29px;font-size:12px;line-height:12px;color:#707070;font-weight:normal;transform:scaleX(0.9496);transform-origin:0 0;">Terms &amp; Conditions</div>
<div class="a" style="left:522px;top:471.45px;width:92px;height:29px;background:#fff;border:1px solid #cfcfcf;border-radius:4px;box-sizing:border-box;"></div>
<div id="t66" class="t" style="left:536.60px;top:479.29px;font-size:12px;line-height:12px;color:#5c5c5c;font-weight:normal;transform:scaleX(0.8661);transform-origin:0 0;">URL</div>
<svg class="a" style="left:598.5px;top:481.65px" width="11" height="8" viewBox="0 0 11 8"><path d="M1.2 1.5 L5.5 5.8 L9.8 1.5" fill="none" stroke="#444" stroke-width="2.2"/></svg>
<div class="a" style="left:623px;top:471.45px;width:118px;height:29px;background:#fff;border:1px solid #cfcfcf;border-radius:4px;box-sizing:border-box;"></div>
<div class="a" style="left:750px;top:471.45px;width:122px;height:29px;background:#fff;border:1px solid #cfcfcf;border-radius:4px;box-sizing:border-box;"></div>
<div id="t67" class="t" style="left:762.80px;top:479.29px;font-size:12px;line-height:12px;color:#888;font-weight:normal;">1</div>
<div class="a" style="left:881px;top:471.45px;width:102px;height:29px;background:#fff;border:1px solid #cfcfcf;border-radius:4px;box-sizing:border-box;"></div>
<div id="t68" class="t" style="left:895.60px;top:479.29px;font-size:12px;line-height:12px;color:#5c5c5c;font-weight:normal;transform:scaleX(0.8943);transform-origin:0 0;">--NONE--</div>
<svg class="a" style="left:967.8px;top:481.65px" width="11" height="8" viewBox="0 0 11 8"><path d="M1.2 1.5 L5.5 5.8 L9.8 1.5" fill="none" stroke="#444" stroke-width="2.2"/></svg>
<div class="a" style="left:992px;top:480.45px;width:11px;height:11px;border:1px solid #767676;border-radius:2px;box-sizing:border-box;background:#fff;"></div>
<svg class="a" style="left:1009px;top:481.45px" width="12" height="12" viewBox="0 0 12 12"><path d="M6 1 L6 11 M1 6 L11 6" stroke="#000" stroke-width="2.2"/></svg>
<svg class="a" style="left:1052px;top:480.45px" width="12" height="10" viewBox="0 0 12 10"><path d="M1.2 4.8 L4.3 7.8 L10.8 1.5" fill="none" stroke="#000" stroke-width="2.2"/></svg>
<svg class="a" style="left:1110px;top:480.75px" width="10" height="10" viewBox="0 0 10 10"><path d="M1.7 1.7 L8.2 8.2 M8.2 1.7 L1.7 8.2" stroke="#000" stroke-width="2"/></svg>
<div class="a" style="left:384px;top:504.3px;width:775px;height:39px;background:#fff;border-top:1px solid #dedede;box-sizing:border-box;"></div>
<svg class="a" style="left:400px;top:518.3px" width="12" height="11" viewBox="0 0 12 11"><path d="M1 5.5 L10 5.5 M6 1.5 L10 5.5 L6 9.5" fill="none" stroke="#111" stroke-width="2"/></svg>
<div class="a" style="left:419px;top:510.3px;width:94px;height:29px;background:#fff;border:1px solid #cfcfcf;border-radius:4px;box-sizing:border-box;"></div>
<div id="t69" class="t" style="left:431.60px;top:518.14px;font-size:12px;line-height:12px;color:#767676;font-weight:normal;font-style:italic;transform:scaleX(0.9412);transform-origin:0 0;">condition1</div>
<div class="a" style="left:522px;top:510.3px;width:92px;height:29px;background:#fff;border:1px solid #cfcfcf;border-radius:4px;box-sizing:border-box;"></div>
<div id="t70" class="t" style="left:536.60px;top:518.14px;font-size:12px;line-height:12px;color:#5c5c5c;font-weight:normal;transform:scaleX(0.8661);transform-origin:0 0;">URL</div>
<svg class="a" style="left:598.5px;top:520.5px" width="11" height="8" viewBox="0 0 11 8"><path d="M1.2 1.5 L5.5 5.8 L9.8 1.5" fill="none" stroke="#444" stroke-width="2.2"/></svg>
<div class="a" style="left:623px;top:510.3px;width:118px;height:29px;background:#fff;border:1px solid #cfcfcf;border-radius:4px;box-sizing:border-box;"></div>
<svg class="a" style="left:757px;top:518.3px" width="12" height="11" viewBox="0 0 12 11"><path d="M1 5.5 L10 5.5 M6 1.5 L10 5.5 L6 9.5" fill="none" stroke="#111" stroke-width="2"/></svg>
<div class="a" style="left:777px;top:510.3px;width:91px;height:29px;background:#fff;border:1px solid #cfcfcf;border-radius:4px;box-sizing:border-box;"></div>
<div id="t71" class="t" style="left:789.80px;top:518.14px;font-size:12px;line-height:12px;color:#888;font-weight:normal;font-style:italic;">1</div>
<div class="a" style="left:881px;top:510.3px;width:102px;height:29px;background:#fff;border:1px solid #cfcfcf;border-radius:4px;box-sizing:border-box;"></div>
<div id="t72" class="t" style="left:895.60px;top:518.14px;font-size:12px;line-height:12px;color:#5c5c5c;font-weight:normal;transform:scaleX(0.9304);transform-origin:0 0;">Terms &amp; Cc</div>
<svg class="a" style="left:967.8px;top:520.5px" width="11" height="8" viewBox="0 0 11 8"><path d="M1.2 1.5 L5.5 5.8 L9.8 1.5" fill="none" stroke="#444" stroke-width="2.2"/></svg>
<div class="a" style="left:992px;top:519.3px;width:11px;height:11px;border:1px solid #767676;border-radius:2px;box-sizing:border-box;background:#fff;"></div>
<svg class="a" style="left:1009px;top:520.30px" width="12" height="12" viewBox="0 0 12 12"><path d="M6 1 L6 11 M1 6 L11 6" stroke="#000" stroke-width="2.2"/></svg>
<svg class="a" style="left:1052px;top:519.30px" width="12" height="10" viewBox="0 0 12 10"><path d="M1.2 4.8 L4.3 7.8 L10.8 1.5" fill="none" stroke="#000" stroke-width="2.2"/></svg>
<svg class="a" style="left:1110px;top:519.60px" width="10" height="10" viewBox="0 0 10 10"><path d="M1.7 1.7 L8.2 8.2 M8.2 1.7 L1.7 8.2" stroke="#000" stroke-width="2"/></svg>
<div class="a" style="left:384px;top:543.15px;width:775px;height:39px;background:#f7f7f7;border-top:1px solid #dedede;box-sizing:border-box;"></div>
<svg class="a" style="left:400px;top:557.15px" width="12" height="11" viewBox="0 0 12 11"><path d="M1 5.5 L10 5.5 M6 1.5 L10 5.5 L6 9.5" fill="none" stroke="#111" stroke-width="2"/></svg>
<div class="a" style="left:419px;top:549.15px;width:94px;height:29px;background:#fff;border:1px solid #cfcfcf;border-radius:4px;box-sizing:border-box;"></div>
<div id="t73" class="t" style="left:431.60px;top:556.99px;font-size:12px;line-height:12px;color:#767676;font-weight:normal;font-style:italic;transform:scaleX(0.9576);transform-origin:0 0;">condition2</div>
<div class="a" style="left:522px;top:549.15px;width:92px;height:29px;background:#fff;border:1px solid #cfcfcf;border-radius:4px;box-sizing:border-box;"></div>
<div id="t74" class="t" style="left:536.60px;top:556.99px;font-size:12px;line-height:12px;color:#5c5c5c;font-weight:normal;transform:scaleX(0.8661);transform-origin:0 0;">URL</div>
<svg class="a" style="left:598.5px;top:559.35px" width="11" height="8" viewBox="0 0 11 8"><path d="M1.2 1.5 L5.5 5.8 L9.8 1.5" fill="none" stroke="#444" stroke-width="2.2"/></svg>
<div class="a" style="left:623px;top:549.15px;width:118px;height:29px;background:#fff;border:1px solid #cfcfcf;border-radius:4px;box-sizing:border-box;"></div>
<svg class="a" style="left:757px;top:557.15px" width="12" height="11" viewBox="0 0 12 11"><path d="M1 5.5 L10 5.5 M6 1.5 L10 5.5 L6 9.5" fill="none" stroke="#111" stroke-width="2"/></svg>
<div class="a" style="left:777px;top:549.15px;width:91px;height:29px;background:#fff;border:1px solid #cfcfcf;border-radius:4px;box-sizing:border-box;"></div>
<div id="t75" class="t" style="left:789.80px;top:556.99px;font-size:12px;line-height:12px;color:#888;font-weight:normal;font-style:italic;">1</div>
<div class="a" style="left:881px;top:549.15px;width:102px;height:29px;background:#fff;border:1px solid #cfcfcf;border-radius:4px;box-sizing:border-box;"></div>
<div id="t76" class="t" style="left:895.60px;top:556.99px;font-size:12px;line-height:12px;color:#5c5c5c;font-weight:normal;transform:scaleX(0.9304);transform-origin:0 0;">Terms &amp; Cc</div>
<svg class="a" style="left:967.8px;top:559.35px" width="11" height="8" viewBox="0 0 11 8"><path d="M1.2 1.5 L5.5 5.8 L9.8 1.5" fill="none" stroke="#444" stroke-width="2.2"/></svg>
<div class="a" style="left:992px;top:558.15px;width:11px;height:11px;border:1px solid #767676;border-radius:2px;box-sizing:border-box;background:#fff;"></div>
<svg class="a" style="left:1009px;top:559.15px" width="12" height="12" viewBox="0 0 12 12"><path d="M6 1 L6 11 M1 6 L11 6" stroke="#000" stroke-width="2.2"/></svg>
<svg class="a" style="left:1052px;top:558.15px" width="12" height="10" viewBox="0 0 12 10"><path d="M1.2 4.8 L4.3 7.8 L10.8 1.5" fill="none" stroke="#000" stroke-width="2.2"/></svg>
<svg class="a" style="left:1110px;top:558.45px" width="10" height="10" viewBox="0 0 10 10"><path d="M1.7 1.7 L8.2 8.2 M8.2 1.7 L1.7 8.2" stroke="#000" stroke-width="2"/></svg>
<div class="a" style="left:384px;top:582.0px;width:775px;height:39px;background:#fff;border-top:1px solid #dedede;box-sizing:border-box;"></div>
<svg class="a" style="left:400px;top:596.0px" width="12" height="11" viewBox="0 0 12 11"><path d="M1 5.5 L10 5.5 M6 1.5 L10 5.5 L6 9.5" fill="none" stroke="#111" stroke-width="2"/></svg>
<div class="a" style="left:419px;top:588.0px;width:94px;height:29px;background:#fff;border:1px solid #cfcfcf;border-radius:4px;box-sizing:border-box;"></div>
<div id="t77" class="t" style="left:431.60px;top:595.84px;font-size:12px;line-height:12px;color:#767676;font-weight:normal;font-style:italic;transform:scaleX(0.9576);transform-origin:0 0;">condition3</div>
<div class="a" style="left:522px;top:588.0px;width:92px;height:29px;background:#fff;border:1px solid #cfcfcf;border-radius:4px;box-sizing:border-box;"></div>
<div id="t78" class="t" style="left:536.60px;top:595.84px;font-size:12px;line-height:12px;color:#5c5c5c;font-weight:normal;transform:scaleX(0.8661);transform-origin:0 0;">URL</div>
<svg class="a" style="left:598.5px;top:598.2px" width="11" height="8" viewBox="0 0 11 8"><path d="M1.2 1.5 L5.5 5.8 L9.8 1.5" fill="none" stroke="#444" stroke-width="2.2"/></svg>
<div class="a" style="left:623px;top:588.0px;width:118px;height:29px;background:#fff;border:1px solid #cfcfcf;border-radius:4px;box-sizing:border-box;"></div>
<svg class="a" style="left:757px;top:596.0px" width="12" height="11" viewBox="0 0 12 11"><path d="M1 5.5 L10 5.5 M6 1.5 L10 5.5 L6 9.5" fill="none" stroke="#111" stroke-width="2"/></svg>
<div class="a" style="left:777px;top:588.0px;width:91px;height:29px;background:#fff;border:1px solid #cfcfcf;border-radius:4px;box-sizing:border-box;"></div>
<div id="t79" class="t" style="left:789.80px;top:595.84px;font-size:12px;line-height:12px;color:#888;font-weight:normal;font-style:italic;">1</div>
<div class="a" style="left:881px;top:588.0px;width:102px;height:29px;background:#fff;border:1px solid #cfcfcf;border-radius:4px;box-sizing:border-box;"></div>
<div id="t80" class="t" style="left:895.60px;top:595.84px;font-size:12px;line-height:12px;color:#5c5c5c;font-weight:normal;transform:scaleX(0.9304);transform-origin:0 0;">Terms &amp; Cc</div>
<svg class="a" style="left:967.8px;top:598.2px" width="11" height="8" viewBox="0 0 11 8"><path d="M1.2 1.5 L5.5 5.8 L9.8 1.5" fill="none" stroke="#444" stroke-width="2.2"/></svg>
<div class="a" style="left:992px;top:597.0px;width:11px;height:11px;border:1px solid #767676;border-radius:2px;box-sizing:border-box;background:#fff;"></div>
<svg class="a" style="left:1009px;top:598.00px" width="12" height="12" viewBox="0 0 12 12"><path d="M6 1 L6 11 M1 6 L11 6" stroke="#000" stroke-width="2.2"/></svg>
<svg class="a" style="left:1052px;top:597.00px" width="12" height="10" viewBox="0 0 12 10"><path d="M1.2 4.8 L4.3 7.8 L10.8 1.5" fill="none" stroke="#000" stroke-width="2.2"/></svg>
<svg class="a" style="left:1110px;top:597.30px" width="10" height="10" viewBox="0 0 10 10"><path d="M1.7 1.7 L8.2 8.2 M8.2 1.7 L1.7 8.2" stroke="#000" stroke-width="2"/></svg>
<div class="a" style="left:728px;top:640px;width:45px;height:26px;background:#97bfcf;border-radius:4px;"></div>
<div id="t81" class="t" style="left:738.30px;top:646.54px;font-size:12px;line-height:12px;color:#fff;font-weight:normal;-webkit-text-stroke:0.35px #fff;transform:scaleX(0.9138);transform-origin:0 0;">Save</div>
<div id="t82" class="t" style="left:778.20px;top:646.25px;font-size:14px;line-height:14px;color:#999;font-weight:normal;transform:scaleX(0.9596);transform-origin:0 0;">Reset</div>
<div class="a" style="left:378px;top:267px;width:787px;height:47px;border:3px solid #e5443d;box-sizing:border-box;"></div>
<div class="a" style="left:0px;top:0px;width:1347px;height:770px;border:1px solid #000;box-sizing:border-box;z-index:10;"></div>
</div></body></html>
